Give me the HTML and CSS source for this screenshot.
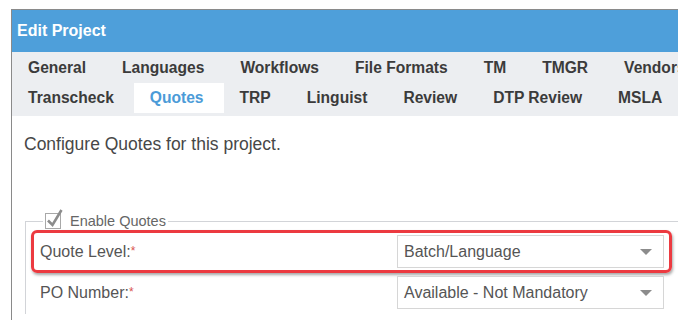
FILE: index.html
```html
<!DOCTYPE html>
<html lang="en">
<head>
    <meta charset="UTF-8">
    <meta name="viewport" content="width=device-width, initial-scale=1.0">
    <title>Edit Project</title>
    <link rel="stylesheet" href="styles.css">
</head>
<body>

<div class="dialog">
    <div class="dialog-header">Edit Project</div>

    <div class="tab-bar">
        <div class="tab-row">
            <span class="tab">General</span>
            <span class="tab">Languages</span>
            <span class="tab">Workflows</span>
            <span class="tab">File Formats</span>
            <span class="tab">TM</span>
            <span class="tab">TMGR</span>
            <span class="tab">Vendors</span>
        </div>
        <div class="tab-row">
            <span class="tab">Transcheck</span>
            <span class="tab active">Quotes</span>
            <span class="tab">TRP</span>
            <span class="tab">Linguist</span>
            <span class="tab">Review</span>
            <span class="tab">DTP Review</span>
            <span class="tab">MSLA</span>
        </div>
    </div>

    <div class="dialog-body">
        <p class="intro">Configure Quotes for this project.</p>

        <fieldset class="quotes-set">
            <legend>
                <span class="check">
                    <svg width="19" height="22" viewBox="0 0 19 22">
                        <rect x="1.5" y="6.5" width="15" height="15" fill="#fff" stroke="#a8a8a8"/>
                        <path d="M4 13.5 L8.5 18 L17.5 3" fill="none" stroke="#8c8c8c" stroke-width="2.6"/>
                    </svg>
                </span>
                Enable Quotes
            </legend>

            <div class="form-row highlight">
                <label>Quote Level:<span class="req">*</span></label>
                <div class="select">Batch/Language<span class="caret"></span></div>
            </div>
            <div class="form-row">
                <label>PO Number:<span class="req">*</span></label>
                <div class="select">Available - Not Mandatory<span class="caret"></span></div>
            </div>
        </fieldset>
    </div>
</div>

</body>
</html>
```

FILE: styles.css
```css
body {
    margin: 0;
    padding: 0;
    background-color: #ffffff;
    font-family: "Liberation Sans", Arial, sans-serif;
    overflow: hidden;
}
.dialog {
    width: 760px;
    margin: 9px 0 0 11px;
    border-top: 1px solid #8a8a8a;
    border-left: 1px solid #8a8a8a;
    height: 320px;
}
.dialog-header {
    height: 42px;
    line-height: 41px;
    padding-left: 5px;
    background-color: #4e9fda;
    color: #ffffff;
    font-size: 16px;
    font-weight: bold;
}
.tab-bar {
    background-color: #eceef1;
    padding: 1px 0 3px 0;
}
.tab-row {
    display: flex;
    height: 30px;
}
.tab {
    padding: 0 20px 0 16px;
    line-height: 30px;
    font-size: 15.6px;
    font-weight: bold;
    color: #3b3b3b;
    white-space: nowrap;
}
.tab.active {
    background-color: #ffffff;
    color: #4b9bd8;
}
.dialog-body {
    padding: 18px 0 0 12px;
}
.intro {
    margin: 0;
    font-size: 17.5px;
    line-height: 20px;
    color: #474747;
}
.quotes-set {
    margin: 58px 0 0 1px;
    padding: 0 0 0 5px;
    border: 1px solid #d2d4d8;
    border-right: none;
    border-bottom: none;
}
.quotes-set legend {
    margin-left: 12px;
    padding: 0 2px 0 1px;
    height: 18px;
    line-height: 18px;
    font-size: 14.5px;
    color: #666666;
    display: flex;
    align-items: center;
    gap: 7px;
}
.check {
    display: block;
    height: 18px;
}
.check svg {
    display: block;
    margin-top: -5px;
}
.form-row {
    width: 624px;
    display: flex;
    align-items: center;
    justify-content: space-between;
    padding: 2px 5px 2px 6px;
    border: 3px solid transparent;
    border-radius: 6px;
}
.form-row + .form-row {
    margin-top: -2px;
}
.form-row.highlight {
    border-color: #ec3a40;
    box-shadow: 1px 2px 3px rgba(0, 0, 0, 0.35);
}
.form-row label {
    font-size: 16px;
    color: #555555;
}
.req {
    color: #d9534f;
    font-size: 12px;
    vertical-align: top;
    position: relative;
    top: 1px;
}
.select {
    width: 259px;
    height: 31px;
    line-height: 31px;
    padding: 0 0 0 6px;
    border: 1px solid #d6d6d6;
    background-color: #ffffff;
    font-size: 16px;
    color: #555555;
    display: flex;
    justify-content: space-between;
    align-items: center;
}
.caret {
    width: 0;
    height: 0;
    margin-right: 11px;
    border-left: 6px solid transparent;
    border-right: 6px solid transparent;
    border-top: 6px solid #8c8c8c;
}
```
